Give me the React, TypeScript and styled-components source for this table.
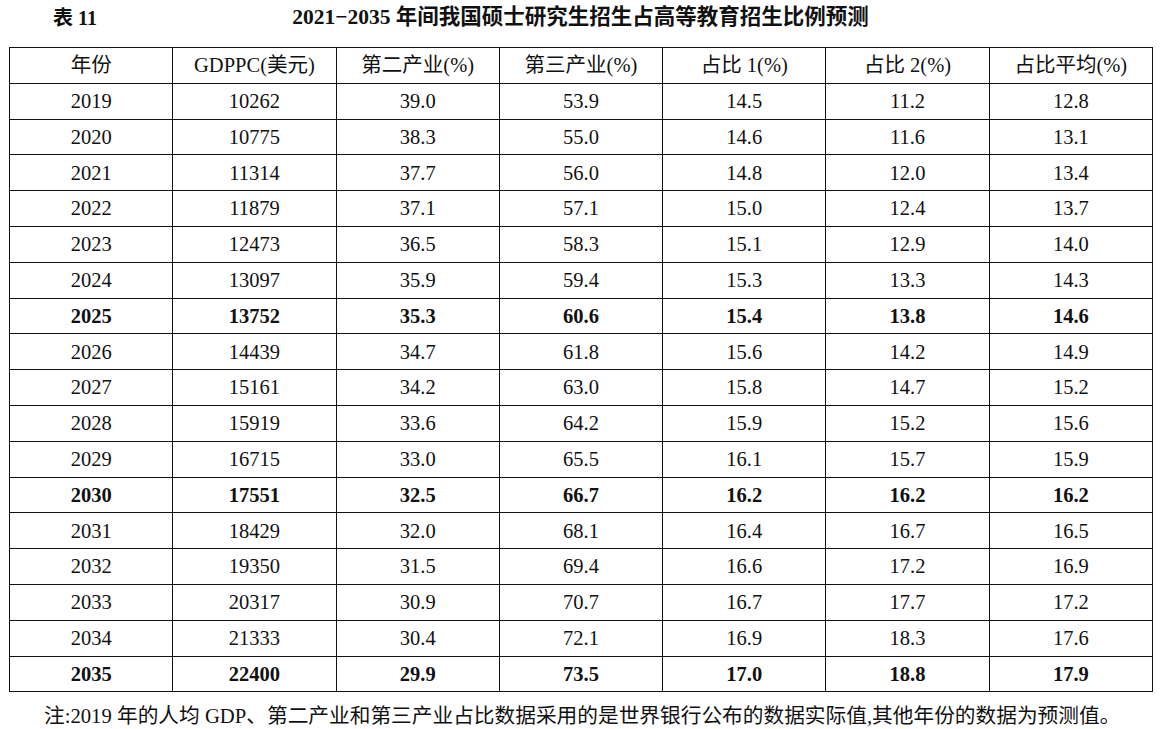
import React from 'react';
import styled, { createGlobalStyle } from 'styled-components';

const GlobalStyle = createGlobalStyle`
  html, body {
    margin: 0;
    padding: 0;
    background: #ffffff;
  }
  body {
    font-family: "Liberation Serif", "Noto Sans CJK SC", serif;
    color: #111111;
  }
`;

const Page = styled.div`
  width: 1163px;
  height: 729px;
  padding: 0 0 0 9px;
  box-sizing: border-box;
  overflow: hidden;
`;

const TitleRow = styled.div`
  width: 1143px;
  height: 47px;
  display: grid;
  grid-template-columns: 200px 1fr 200px;
  align-items: center;
  box-sizing: border-box;
`;

const TableNo = styled.div`
  padding-left: 44px;
  padding-bottom: 12px;
  font-size: 20px;
  font-weight: 700;
  line-height: 1.2;
`;

const Title = styled.div`
  text-align: center;
  padding-bottom: 12px;
  font-size: 21.5px;
  font-weight: 700;
  line-height: 1.2;
  white-space: nowrap;
`;

const Table = styled.table`
  border-collapse: collapse;
  table-layout: fixed;
  width: 1144px;
`;

const Cell = styled.td<{ $bold?: boolean }>`
  border: 1px solid #111111;
  height: 34.8px;
  padding: 0;
  text-align: center;
  vertical-align: middle;
  font-size: 20.5px;
  font-weight: ${p => (p.$bold ? 700 : 400)};
  white-space: nowrap;
  line-height: 1;
`;

const HeadCell = styled(Cell).attrs({ as: 'th' })`
  font-weight: 400;
`;

const Note = styled.div`
  padding: 12px 0 0 35px;
  font-size: 20.7px;
  line-height: 1.2;
  white-space: nowrap;
`;

const headers = ['年份', 'GDPPC(美元)', '第二产业(%)', '第三产业(%)', '占比 1(%)', '占比 2(%)', '占比平均(%)'];

const rows: string[][] = [
  ['2019', '10262', '39.0', '53.9', '14.5', '11.2', '12.8'],
  ['2020', '10775', '38.3', '55.0', '14.6', '11.6', '13.1'],
  ['2021', '11314', '37.7', '56.0', '14.8', '12.0', '13.4'],
  ['2022', '11879', '37.1', '57.1', '15.0', '12.4', '13.7'],
  ['2023', '12473', '36.5', '58.3', '15.1', '12.9', '14.0'],
  ['2024', '13097', '35.9', '59.4', '15.3', '13.3', '14.3'],
  ['2025', '13752', '35.3', '60.6', '15.4', '13.8', '14.6'],
  ['2026', '14439', '34.7', '61.8', '15.6', '14.2', '14.9'],
  ['2027', '15161', '34.2', '63.0', '15.8', '14.7', '15.2'],
  ['2028', '15919', '33.6', '64.2', '15.9', '15.2', '15.6'],
  ['2029', '16715', '33.0', '65.5', '16.1', '15.7', '15.9'],
  ['2030', '17551', '32.5', '66.7', '16.2', '16.2', '16.2'],
  ['2031', '18429', '32.0', '68.1', '16.4', '16.7', '16.5'],
  ['2032', '19350', '31.5', '69.4', '16.6', '17.2', '16.9'],
  ['2033', '20317', '30.9', '70.7', '16.7', '17.7', '17.2'],
  ['2034', '21333', '30.4', '72.1', '16.9', '18.3', '17.6'],
  ['2035', '22400', '29.9', '73.5', '17.0', '18.8', '17.9'],
];

const boldYears = ['2025', '2030', '2035'];

const App = () => {
  return (
    <Page>
      <GlobalStyle />
      <TitleRow>
        <TableNo>表 11</TableNo>
        <Title>2021−2035 年间我国硕士研究生招生占高等教育招生比例预测</Title>
        <div />
      </TitleRow>
      <Table>
        <colgroup>
          {headers.map(h => (
            <col key={h} style={{ width: `${100 / headers.length}%` }} />
          ))}
        </colgroup>
        <thead>
          <tr>
            {headers.map(h => (
              <HeadCell key={h}>{h}</HeadCell>
            ))}
          </tr>
        </thead>
        <tbody>
          {rows.map(r => (
            <tr key={r[0]}>
              {r.map((v, i) => (
                <Cell key={i} $bold={boldYears.includes(r[0])}>{v}</Cell>
              ))}
            </tr>
          ))}
        </tbody>
      </Table>
      <Note>注:2019 年的人均 GDP、第二产业和第三产业占比数据采用的是世界银行公布的数据实际值,其他年份的数据为预测值。</Note>
    </Page>
  );
};

export default App;
